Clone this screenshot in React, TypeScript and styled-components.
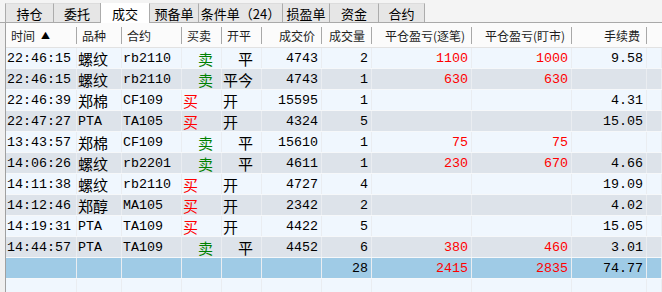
import React from "react";
import styled, { createGlobalStyle } from "styled-components";

const GlobalStyle = createGlobalStyle`
  html, body {
    margin: 0;
    padding: 0;
    background: #f0f0f0;
  }
`;

type Align = "left" | "right";
type Tone = "light" | "dark" | "total";

type Column = {
  title: string;
  width: number;
  align: Align;
};

const columns: Column[] = [
  { title: "时间", width: 71, align: "left" },
  { title: "品种", width: 45, align: "left" },
  { title: "合约", width: 60, align: "left" },
  { title: "买卖", width: 40, align: "left" },
  { title: "开平", width: 40, align: "left" },
  { title: "成交价", width: 60, align: "right" },
  { title: "成交量", width: 50, align: "right" },
  { title: "平仓盈亏(逐笔)", width: 100, align: "right" },
  { title: "平仓盈亏(盯市)", width: 100, align: "right" },
  { title: "手续费", width: 75, align: "right" },
];

const template = columns.map((c) => `${c.width}px`).join(" ") + " 1fr";

const tabs = [
  { label: "持仓", width: 48 },
  { label: "委托", width: 47 },
  { label: "成交", width: 49, active: true },
  { label: "预备单", width: 49 },
  { label: "条件单（24）", width: 84 },
  { label: "损盈单", width: 47 },
  { label: "资金", width: 49 },
  { label: "合约", width: 47 },
];

type Trade = [string, string, string, string, string, string, string, string, string, string];

const trades: Trade[] = [
  ["22:46:15", "螺纹", "rb2110", "卖", "平", "4743", "2", "1100", "1000", "9.58"],
  ["22:46:15", "螺纹", "rb2110", "卖", "平今", "4743", "1", "630", "630", ""],
  ["22:46:39", "郑棉", "CF109", "买", "开", "15595", "1", "", "", "4.31"],
  ["22:47:27", "PTA", "TA105", "买", "开", "4324", "5", "", "", "15.05"],
  ["13:43:57", "郑棉", "CF109", "卖", "平", "15610", "1", "75", "75", ""],
  ["14:06:26", "螺纹", "rb2201", "卖", "平", "4611", "1", "230", "670", "4.66"],
  ["14:11:38", "螺纹", "rb2110", "买", "开", "4727", "4", "", "", "19.09"],
  ["14:12:46", "郑醇", "MA105", "买", "开", "2342", "2", "", "", "4.02"],
  ["14:19:31", "PTA", "TA109", "买", "开", "4422", "5", "", "", "15.05"],
  ["14:44:57", "PTA", "TA109", "卖", "平", "4452", "6", "380", "460", "3.01"],
];

const total: Trade = ["", "", "", "", "", "", "28", "2415", "2835", "74.77"];

const Page = styled.div`
  width: 662px;
  height: 292px;
  overflow: hidden;
  background: #f0f0f0;
  display: flex;
  flex-direction: column;
`;

const TabBar = styled.div`
  display: flex;
  align-items: flex-end;
  height: 22px;
  padding-left: 5px;
  border-bottom: 1px solid #a9a9a9;
  background: #f4f4f4;
`;

const Tab = styled.div<{ $w: number; $active?: boolean }>`
  width: ${(p) => p.$w}px;
  height: ${(p) => (p.$active ? 20 : 19)}px;
  margin-bottom: ${(p) => (p.$active ? -1 : 0)}px;
  box-sizing: border-box;
  display: flex;
  align-items: center;
  justify-content: center;
  font-family: "Noto Sans CJK SC", sans-serif;
  font-size: 13px;
  color: #000;
  background: ${(p) => (p.$active ? "#ffffff" : "#e6e6e6")};
  border-left: 1px solid #acacac;
  border-top: ${(p) => (p.$active ? "none" : "1px solid #dcdcdc")};
  &:last-child {
    border-right: 1px solid #acacac;
  }
`;

const Grid = styled.div`
  flex: 1;
  margin-left: 5px;
  border-left: 1px solid #a0a0a0;
  background: #f0f7fe;
  display: flex;
  flex-direction: column;
`;

const HeaderRow = styled.div`
  display: grid;
  grid-template-columns: ${template};
  height: 24px;
  background: #fbfbfb;
  border-bottom: 1px solid #e2e2e2;
`;

const HeaderCell = styled.div<{ $align: Align }>`
  display: flex;
  align-items: center;
  justify-content: ${(p) => (p.$align === "right" ? "flex-end" : "flex-start")};
  padding: 0 ${(p) => (p.$align === "right" ? 7 : 0)}px 0 ${(p) => (p.$align === "right" ? 0 : 5)}px;
  font-family: "Noto Sans CJK SC", sans-serif;
  font-size: 12px;
  color: #1e1e1e;
  white-space: nowrap;
  position: relative;
  &::after {
    content: "";
    position: absolute;
    right: 0;
    top: 4px;
    bottom: 3px;
    width: 1px;
    background: #a8a8a8;
  }
`;

const SortArrow = styled.span`
  font-size: 9px;
  margin-left: 6px;
  color: #000;
`;

const Row = styled.div<{ $tone: Tone }>`
  display: grid;
  grid-template-columns: ${template};
  height: 20px;
  border-bottom: 1px solid #f6f8fa;
  background: ${(p) =>
    p.$tone === "total" ? "#9fcbe6" : p.$tone === "dark" ? "#dde3ea" : "#f0f7fe"};
`;

const FillRow = styled.div`
  flex: 1;
  display: grid;
  grid-template-columns: ${template};
`;

const Cell = styled.div<{ $align: Align; $color?: string; $indent?: number }>`
  display: flex;
  align-items: center;
  justify-content: ${(p) => (p.$align === "right" ? "flex-end" : "flex-start")};
  padding-left: ${(p) => (p.$align === "left" ? 1 + (p.$indent ?? 0) : 0)}px;
  padding-right: ${(p) => (p.$align === "right" ? 3 : 0)}px;
  border-right: 1px solid #eaedf1;
  font-family: "Liberation Mono", "Noto Sans CJK SC", monospace;
  font-size: 13.33px;
  color: ${(p) => p.$color ?? "#000"};
  white-space: pre;
  overflow: hidden;
`;

const Han = styled.span`
  font-family: "Noto Sans CJK SC", sans-serif;
  font-size: 15px;
  line-height: 1;
`;

const renderText = (text: string) =>
  /[\u4e00-\u9fff]/.test(text) ? <Han>{text}</Han> : text;

// 卖 and 平 sit two spaces in, as in the terminal's fixed-width grid
const cellProps = (row: Trade, i: number) => {
  const v = row[i];
  if (i === 3) {
    return v === "卖" ? { $color: "#008000", $indent: 15 } : { $color: "#ff0000" };
  }
  if (i === 4) {
    return v === "平" ? { $indent: 15 } : {};
  }
  if (i === 7 || i === 8) return { $color: "#ff0000" };
  return {};
};

const TradeRow: React.FC<{ row: Trade; tone: Tone }> = ({ row, tone }) => (
  <Row $tone={tone}>
    {row.map((v, i) => (
      <Cell key={i} $align={columns[i].align} {...cellProps(row, i)}>
        {renderText(v)}
      </Cell>
    ))}
    <Cell $align="left" />
  </Row>
);

export default function App() {
  return (
    <Page>
      <GlobalStyle />
      <TabBar>
        {tabs.map((t) => (
          <Tab key={t.label} $w={t.width} $active={t.active}>
            {t.label}
          </Tab>
        ))}
      </TabBar>
      <Grid>
        <HeaderRow>
          {columns.map((c, i) => (
            <HeaderCell key={c.title} $align={c.align}>
              {c.title}
              {i === 0 && <SortArrow>▲</SortArrow>}
            </HeaderCell>
          ))}
          <div />
        </HeaderRow>
        {trades.map((r, idx) => (
          <TradeRow key={idx} row={r} tone={idx % 2 === 0 ? "light" : "dark"} />
        ))}
        <TradeRow row={total} tone="total" />
        <FillRow>
          {columns.map((c) => (
            <Cell key={c.title} $align={c.align} />
          ))}
          <Cell $align="left" />
        </FillRow>
      </Grid>
    </Page>
  );
}
